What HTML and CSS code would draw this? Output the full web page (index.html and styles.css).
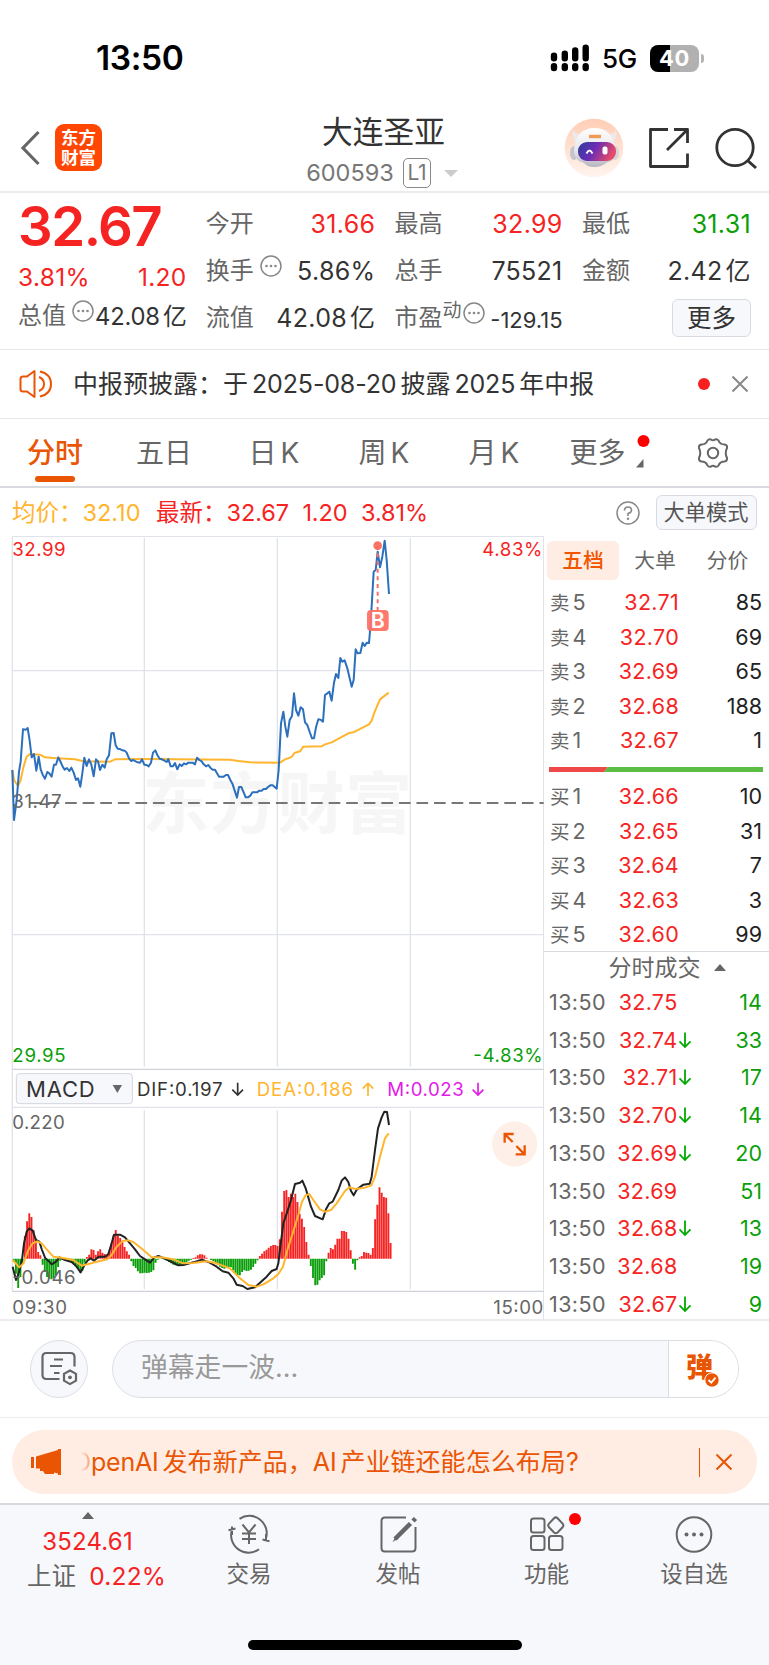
FILE: index.html
```
<!DOCTYPE html>
<html lang="zh-CN">
<head>
<meta charset="utf-8">
<title>大连圣亚 600593</title>
<link rel="stylesheet" href="styles.css">
</head>
<body>
<div class="status">
  <span class="clock">13:50</span>
  <svg class="signal" width="40" height="28" viewBox="0 0 40 28">
    <g stroke="#000" stroke-width="6.4" stroke-linecap="round">
      <path d="M4 11.8v2.4M14.8 9.8v4.4M25.2 6.5v7.7M35.7 3.6v10.6M4 22.3v1.8M14.8 22.3v1.8M25.2 22.3v1.8M35.7 22.3v1.8"/>
    </g>
  </svg>
  <span class="net">5G</span>
  <span class="battery">40</span><i class="battery-tip"></i>
</div>

<header class="header">
  <div class="head-left">
    <svg width="22" height="38" viewBox="0 0 22 38"><path d="M19.500 3 4 19 19.500 35" fill="none" stroke="#666" stroke-width="3.200"/></svg>
    <div class="logo">东方<br>财富</div>
  </div>
  <div class="head-mid">
    <div class="name">大连圣亚</div>
    <div class="code"><span>600593</span><b>L1</b><i></i></div>
  </div>
  <div class="head-right">
    <svg class="robot" width="60" height="60" viewBox="0 0 60 60">
      <defs>
        <linearGradient id="halo" x1="0" y1="0" x2="0" y2="1"><stop offset="0" stop-color="#ffcdb5"/><stop offset="1" stop-color="#fff4ee"/></linearGradient>
        <linearGradient id="visor" x1="0" y1="0" x2="1" y2=".3"><stop offset="0" stop-color="#2a3e9c"/><stop offset=".5" stop-color="#6c2cb4"/><stop offset="1" stop-color="#e34a6c"/></linearGradient>
        <linearGradient id="shell" x1="0" y1="0" x2="0" y2="1"><stop offset="0" stop-color="#fff"/><stop offset=".6" stop-color="#e6e4e8"/><stop offset="1" stop-color="#b4b6c0"/></linearGradient>
      </defs>
      <circle cx="30" cy="30" r="29.300" fill="url(#halo)"/>
      <path d="M9 11q1 5 8 6l-5 8Q7 18 9 11ZM52 11q-1 5-8 6l5 8q5-7 3-14Z" fill="#eee9ea"/>
      <ellipse cx="10" cy="35" rx="4" ry="7" fill="#c4c4cc"/><ellipse cx="51" cy="35" rx="4" ry="7" fill="#d4d4da"/>
      <path d="M10 32Q12 10 30.500 10T51 32Q52 43 43 44.500Q37 49 30 49T20 45Q10 43 10 32Z" fill="url(#shell)"/>
      <path d="M25 18.500h12" stroke="#ef9b55" stroke-width="3.400"/>
      <rect x="14" y="24" width="38" height="19" rx="9" fill="url(#visor)"/>
      <path d="M22.500 35.500q3-6 6 0" fill="none" stroke="#fff" stroke-width="2"/>
      <rect x="38.500" y="28.500" width="5" height="8" rx="2" fill="#fff"/>
    </svg>
    <svg width="44" height="44" viewBox="0 0 44 44"><path d="M21 3.500H3.500v37h37V27.500M27 3.500h13.500V17M40 4 20 24" fill="none" stroke="#333" stroke-width="2.800" stroke-linejoin="round"/></svg>
    <svg width="44" height="44" viewBox="0 0 44 44"><circle cx="21" cy="21.500" r="18.200" fill="none" stroke="#333" stroke-width="2.800"/><path d="m33 34 9 8" stroke="#333" stroke-width="3"/></svg>
  </div>
</header>

<section class="quote">
  <div class="col lead">
    <div class="price">32.67</div>
    <div class="pair red change"><span>3.81%</span><span>1.20</span></div>
    <div class="pair cap"><label>总值</label><svg class="info" viewBox="0 0 22 22"><use href="#dots"/></svg><span>42.08<em>亿</em></span></div>
  </div>
  <div class="col">
    <div class="pair"><label>今开</label><span class="red">31.66</span></div>
    <div class="pair"><label>换手</label><svg class="info" viewBox="0 0 22 22"><use href="#dots"/></svg><span>5.86%</span></div>
    <div class="pair"><label>流值</label><span>42.08<em>亿</em></span></div>
  </div>
  <div class="col">
    <div class="pair"><label>最高</label><span class="red">32.99</span></div>
    <div class="pair"><label>总手</label><span>75521</span></div>
    <div class="pair pe"><label>市盈<sup>动</sup></label><svg class="info" viewBox="0 0 22 22"><g id="dots"><circle cx="11" cy="11" r="10" fill="none" stroke="#888" stroke-width="1.500"/><g fill="#888"><circle cx="6.500" cy="11" r="1.300"/><circle cx="11" cy="11" r="1.300"/><circle cx="15.500" cy="11" r="1.300"/></g></g></svg><span>-129.15</span></div>
  </div>
  <div class="col">
    <div class="pair"><label>最低</label><span class="green">31.31</span></div>
    <div class="pair"><label>金额</label><span>2.42<em>亿</em></span></div>
    <div class="pair end"><button class="more">更多</button></div>
  </div>
</section>

<section class="notice">
  <svg width="34" height="30" viewBox="0 0 34 30" fill="none" stroke="#ea5504" stroke-width="2" stroke-linejoin="round"><path d="M15.500 2v26L8 22.500H4Q1.500 22.500 1.500 20V10Q1.500 7.500 4 7.500H8ZM20 8q5 2 5 7t-5 7M21 2.500Q32 5 32 15T21 27.500"/></svg>
  <p>中报预披露：于<em>2025-08-20</em>披露<em>2025</em>年中报</p>
  <i class="dot"></i>
  <svg class="close" width="18" height="18" viewBox="0 0 18 18"><path d="m1.500 1.500 15 15m0-15-15 15" stroke="#888" stroke-width="2"/></svg>
</section>

<nav class="tabs">
  <span class="on">分时</span><span>五日</span><span>日<em>K</em></span><span>周<em>K</em></span><span>月<em>K</em></span>
  <span class="drop">更多<svg width="18" height="36" viewBox="0 0 18 36"><circle cx="10.500" cy="6" r="6" fill="#f00"/><path d="M10.500 24v8.500H3Z" fill="#666"/></svg></span>
  <svg class="gear" width="34" height="32" viewBox="0 0 34 32" fill="none" stroke="#666" stroke-width="2"><path d="M11.500 3.500Q13 1.500 15 2.500Q17 4 19 2.500Q21 1.500 22.500 3.500Q24 7.500 28.500 7.500Q31.500 8 31 11Q28.500 16 31 21Q31.500 24 28.500 24.500Q24 24.500 22.500 28.500Q21 30.500 19 29.500Q17 28 15 29.500Q13 30.500 11.500 28.500Q10 24.500 5.500 24.500Q2.500 24 3 21Q5.500 16 3 11Q2.500 8 5.500 7.500Q10 7.500 11.500 3.500Z"/><circle cx="17" cy="16" r="5.200"/></svg>
</nav>

<section class="summary">
  <span class="avg">均价：<b>32.10</b></span>
  <span class="last">最新：<b>32.67</b><b>1.20</b><b>3.81%</b></span>
  <svg class="help" width="26" height="26" viewBox="0 0 26 26"><circle cx="13" cy="13" r="11" fill="none" stroke="#888" stroke-width="1.500"/><path d="M9.500 10.500Q9.500 7 13 7t3.500 3.200Q16.500 12.500 13 13.500v2.500" fill="none" stroke="#888" stroke-width="1.600"/><circle cx="13" cy="18.700" r="1.200" fill="#888"/></svg>
  <button>大单模式</button>
</section>

<main class="main">
  <svg class="chart" width="544" height="784" viewBox="0 0 1632 2352">
    <text class="mark" x="427" y="875" textLength="810">东方财富</text>
    <g class="grid">
      <path d="M37 1H1632M37 1V2266M1631 1V2352M433 6V1592M832 6V1592M1231 6V1592M37 404H1631M37 1196H1631M433 1723V2260M832 1723V2260M1231 1723V2260M37 1714H1631"/>
      <path class="strong" d="M37 1600H1631M37 2266H1631"/>
    </g>
    <path class="mid" d="M90 801H1631"/>
    <g transform="translate(0 -18)">
      <polyline class="amber" points="37,720 42,750 54,768 62,750 70,712 80,680 90,672 120,674 135,682 160,684 225,688 250,694 330,695 345,688 440,687 690,689 715,693 750,697 840,698 855,688 875,681 883,669 900,664 910,650 965,649 975,643 995,637 1045,610 1060,607 1107,583 1115,572 1123,548 1140,508 1166,488"/>
      <polyline class="blue" points="37,720 42,870 50,810 57,725 62,695 69,598 78,599 83,594 89,632 95,682 102,672 109,722 116,680 122,718 128,734 135,746 142,726 148,730 155,740 162,704 168,704 175,682 182,696 188,710 194,719 201,714 208,723 214,713 221,728 228,750 234,745 241,770 247,730 253,683 260,708 267,688 274,704 281,739 288,688 294,694 300,720 307,704 314,713 320,688 327,676 334,610 341,609 347,646 353,656 360,657 367,661 374,662 380,668 387,685 393,693 400,690 407,694 413,697 420,698 426,688 433,704 440,705 446,709 453,698 459,668 466,661 472,675 479,686 486,688 493,692 500,696 505,687 512,709 519,709 525,699 532,718 539,703 545,708 552,700 558,703 565,698 578,698 585,703 591,683 598,690 605,694 611,703 618,709 625,705 631,713 638,719 645,719 651,730 657,740 671,740 678,735 684,735 691,750 698,763 704,782 711,803 717,771 724,771 731,787 737,802 744,802 751,797 757,787 771,787 778,782 785,782 791,777 798,777 804,771 811,766 818,766 824,771 830,776 836,720 843,580 850,545 856,590 862,620 869,570 876,558 882,490 888,540 895,557 902,532 909,538 915,577 922,585 929,606 936,625 942,625 948,592 955,568 962,569 969,575 975,495 982,490 988,485 995,512 1002,458 1008,432 1015,444 1021,384 1027,395 1034,391 1042,415 1049,445 1055,470 1061,450 1067,358 1073,370 1081,369 1088,338 1094,348 1100,338 1107,339 1112,280 1121,125 1127,120 1133,65 1140,112 1147,80 1154,32 1160,90 1167,192"/>
      <path d="M1133 47V240" stroke="#fe6f63" stroke-width="6" stroke-dasharray="12 11"/>
      <circle cx="1133" cy="47" r="13" fill="#f96658" fill-opacity=".9"/>
      <rect x="1101" y="240" width="65" height="63" rx="12" fill="#ff6f62" fill-opacity=".93"/>
      <text x="1133.500" y="295" class="buy">B</text>
    </g>
    <text class="t red" x="37" y="59" textLength="160">32.99</text>
    <text class="t red" x="1447" y="59" textLength="180">4.83%</text>
    <text class="t gray" x="37" y="817" textLength="148">31.47</text>
    <text class="t green" x="37" y="1577" textLength="160">29.95</text>
    <text class="t green" x="1420" y="1577" textLength="208">-4.83%</text>

    <rect x="49" y="1613" width="348" height="90" rx="9" fill="#f7f8fb" stroke="#d4d6dd" stroke-width="3"/>
    <text x="78" y="1683" class="sel" textLength="206">MACD</text>
    <path d="M338 1647h28l-14 24Z" fill="#666"/>
    <text class="t black" x="411" y="1679" textLength="257">DIF:0.197</text>
    <text class="t amb" x="770" y="1679" textLength="289">DEA:0.186</text>
    <text class="t pink" x="1162" y="1679" textLength="229">M:0.023</text>
    <g fill="none" stroke-width="5">
      <path stroke="#333" d="M713 1640v37m-16-16 16 16 16-16"/>
      <path stroke="#ffb52e" d="M1104 1680v-38m-16 16 16-16 16 16"/>
      <path stroke="#e21be8" d="M1434 1640v37m-16-16 16 16 16-16"/>
    </g>
    <g transform="translate(0 1572)">
      <path id="up" class="up"/>
      <path id="down" class="down"/>
      <polyline class="dif" points="38,620 48,660 56,640 66,600 72,550 80,515 88,505 98,512 108,540 118,545 126,570 136,595 148,605 155,613 168,605 178,592 195,600 215,606 228,618 242,637 252,618 262,602 272,595 282,602 296,590 315,590 325,582 332,560 342,524 360,524 375,532 390,550 405,568 420,588 435,598 450,608 463,592 475,588 495,596 515,606 535,616 550,615 580,607 605,599 625,606 650,620 668,634 685,638 700,655 710,674 728,678 742,687 765,682 780,668 800,650 815,633 830,627 835,610 841,560 850,490 861,458 873,420 885,372 900,368 907,362 917,385 933,440 945,468 968,478 978,448 988,430 998,425 1015,390 1025,362 1035,352 1045,366 1053,393 1061,406 1071,388 1090,374 1109,371 1115,350 1125,270 1134,205 1145,172 1153,155 1161,156 1167,195"/>
      <polyline class="amber" points="38,600 58,622 70,610 85,570 98,550 112,544 125,550 140,568 160,590 185,593 220,600 245,617 265,612 290,605 322,598 335,585 350,560 368,543 385,541 400,546 430,570 455,592 485,592 520,598 550,610 580,609 620,604 650,610 690,625 720,655 745,675 770,680 790,673 820,655 835,642 849,620 862,570 878,520 895,465 906,425 917,406 928,402 940,420 960,448 975,455 993,450 1010,430 1035,393 1048,382 1065,387 1095,383 1114,376 1125,350 1140,290 1155,235 1166,220"/>
    </g>
    <text class="t gray" x="37" y="1779" textLength="157">0.220</text>
    <text class="t gray" x="37" y="2243" textLength="190">-0.046</text>
    <text class="t gray" x="37" y="2334" textLength="164">09:30</text>
    <text class="t gray" x="1480" y="2334" textLength="150">15:00</text>
    <circle cx="1544" cy="1824" r="68" fill="#fef0e9"/>
    <path d="m1538 1818-24-24m0 26v-26h27M1549 1830l25 25m0-27v27h-27" fill="none" stroke="#ea5504" stroke-width="7"/>
  </svg>

  <aside class="book">
    <div class="book-tabs"><span class="on">五档</span><span>大单</span><span>分价</span></div>
    <ul class="levels">
      <li><span>卖<em>5</em></span><b>32.71</b><i>85</i></li>
      <li><span>卖<em>4</em></span><b>32.70</b><i>69</i></li>
      <li><span>卖<em>3</em></span><b>32.69</b><i>65</i></li>
      <li><span>卖<em>2</em></span><b>32.68</b><i>188</i></li>
      <li><span>卖<em>1</em></span><b>32.67</b><i>1</i></li>
    </ul>
    <svg class="ratio" width="214" height="5" viewBox="0 0 214 5"><path d="M0 0h59l-4 5H0Z" fill="#ef4848"/><path d="M59 0h155v5H55Z" fill="#5bbd43"/></svg>
    <ul class="levels">
      <li><span>买<em>1</em></span><b>32.66</b><i>10</i></li>
      <li><span>买<em>2</em></span><b>32.65</b><i>31</i></li>
      <li><span>买<em>3</em></span><b>32.64</b><i>7</i></li>
      <li><span>买<em>4</em></span><b>32.63</b><i>3</i></li>
      <li><span>买<em>5</em></span><b>32.60</b><i>99</i></li>
    </ul>
    <div class="deal-title">分时成交<i></i></div>
    <ul class="deals">
      <li><span>13:50</span><b>32.75</b><u></u><i>14</i></li>
      <li><span>13:50</span><b>32.74</b><svg viewBox="0 0 14 18"><path id="fall" d="M7 1.500v14.500M1.500 10.300 7 16l5.500-5.700" fill="none" stroke="#0a0" stroke-width="1.800"/></svg><i>33</i></li>
      <li><span>13:50</span><b>32.71</b><svg viewBox="0 0 14 18"><use href="#fall"/></svg><i>17</i></li>
      <li><span>13:50</span><b>32.70</b><svg viewBox="0 0 14 18"><use href="#fall"/></svg><i>14</i></li>
      <li><span>13:50</span><b>32.69</b><svg viewBox="0 0 14 18"><use href="#fall"/></svg><i>20</i></li>
      <li><span>13:50</span><b>32.69</b><u></u><i>51</i></li>
      <li><span>13:50</span><b>32.68</b><svg viewBox="0 0 14 18"><use href="#fall"/></svg><i>13</i></li>
      <li><span>13:50</span><b>32.68</b><u></u><i>19</i></li>
      <li><span>13:50</span><b>32.67</b><svg viewBox="0 0 14 18"><use href="#fall"/></svg><i>9</i></li>
    </ul>
  </aside>
</main>

<section class="barrage">
  <div class="round">
    <svg width="38" height="36" viewBox="0 0 38 36" fill="none" stroke="#666" stroke-width="2.200"><path d="M19.500 28H6.500Q2.500 28 2.500 24V6Q2.500 2 6.500 2H30.500Q34.500 2 34.500 6V15.500M14 8.500H23M10 15H22M14 22h5.500"/><path d="m30 19.500 6 3.400v6.800l-6 3.400-6-3.400v-6.800Z"/><circle cx="30" cy="26.300" r="1.300" fill="#666" stroke-width="1.200"/></svg>
  </div>
  <div class="field">
    <span>弹幕走一波...</span>
    <div class="send">弹<svg width="16" height="16" viewBox="0 0 16 16"><circle cx="8" cy="8" r="7.200" fill="#ea5504" stroke="#fff" stroke-width="1"/><path d="m4.500 8 2.800 2.700 4.200-5" fill="none" stroke="#fff" stroke-width="1.800"/></svg></div>
  </div>
</section>

<section class="promo">
  <div class="pill">
    <svg width="30" height="28" viewBox="0 0 30 28"><path d="M0 9h3v11H0ZM5 8.500 27 2V1h3v26h-3v-1.500l-4-1V26H14l-2-3H9v-2.500H5Z" fill="#ea5504"/></svg>
    <p><s>O</s>penAI<em>发布新产品，</em>AI<em>产业链还能怎么布局</em>?</p>
    <i></i>
    <svg width="18" height="18" viewBox="0 0 18 18"><path d="m1.500 1.500 15 15m0-15-15 15" stroke="#ea5504" stroke-width="2"/></svg>
  </div>
</section>

<footer class="dock">
  <div class="index">
    <i></i>
    <b>3524.61</b>
    <p>上证<b>0.22%</b></p>
  </div>
  <div class="item"><svg width="44" height="40" viewBox="0 0 44 40" fill="none" stroke="#666" stroke-width="2"><path d="M12.500 4.800A17.500 17.500 0 0 1 38.800 25M35.500 25.500l7 1.800M39 20v7M32 35.200A17.500 17.500 0 0 1 5.200 15M8.500 14.500l-7 1.800M5 21v-8.500M15.500 10.500l6.500 8 6.500-8M22 18.500V30M15 19.500h14M15 25h14"/></svg>交易</div>
  <div class="item"><svg width="40" height="40" viewBox="0 0 40 40" fill="none" stroke="#666" stroke-width="2"><path d="M28 3.500H7Q3.500 3.500 3.500 7v27Q3.500 37.500 7 37.500H34Q37.500 37.500 37.500 34V13"/><path d="M37.500 4.500l-2.500 2.500M32.500 9.500 17 25" stroke-width="4.500"/><path d="m18 22-3.500 6 6-3.500Z" fill="#666" stroke="none"/></svg>发帖</div>
  <div class="item"><svg width="40" height="40" viewBox="0 0 40 40" fill="none" stroke="#666" stroke-width="2"><rect x="4" y="4.500" width="13.500" height="14" rx="2.500"/><rect x="4" y="22" width="13.500" height="14" rx="2.500"/><rect x="22" y="22" width="13.500" height="14" rx="2.500"/><path d="M27 4.200Q28.800 2.500 30.600 4.200L35.800 9.800Q37 11.500 35.800 13L30.600 18.500Q28.800 20 27 18.500L21.800 13Q20.600 11.500 21.800 9.800Z"/></svg><i class="dot"></i>功能</div>
  <div class="item"><svg width="40" height="40" viewBox="0 0 40 40"><circle cx="20" cy="20.500" r="17.300" fill="none" stroke="#666" stroke-width="2"/><g fill="#666"><circle cx="12.500" cy="20.500" r="2"/><circle cx="20" cy="20.500" r="2"/><circle cx="27.500" cy="20.500" r="2"/></g></svg>设自选</div>
</footer>
<div class="home"><i></i></div>
<script src="macd.js"></script>
</body>
</html>
```
FILE: macd.js
```
// Histogram heights, one value per trading minute since 09:30.
const bars = [-10,-45,-88,-55,-15,68,112,136,125,85,60,20,10,-18,-40,-55,-60,-62,-58,-50,-25,-6,0,-3,-5,-8,-10,-15,-20,-28,
  -42,-36,-12,5,12,28,26,12,22,28,18,14,10,20,45,70,86,70,62,50,35,22,12,-8,-22,-28,-38,-44,-44,-42,
  -43,-42,-40,-35,-12,-3,-1,0,-3,-6,-10,-14,-18,-20,-21,-20,-18,-15,-10,-6,-3,2,4,10,13,13,10,3,0,-4,
  -8,-12,-18,-24,-28,-30,-28,-26,-26,-35,-45,-50,-50,-40,-35,-37,-36,-33,-25,-15,-5,8,15,22,27,33,38,41,41,38,
  58,141,203,206,185,195,185,195,170,135,120,95,50,12,-22,-58,-80,-78,-65,-58,-50,-8,18,32,28,42,60,60,83,83,
  80,60,25,-15,-33,-5,4,8,20,18,17,12,32,118,162,214,198,185,183,136,47];
const zero = 596;
const pathFor = (test) => bars
  .map((v, i) => (test(v) ? `M${(41.3 + i * 6.65).toFixed(1)} ${zero}V${zero - v}` : ''))
  .join('');
document.getElementById('up').setAttribute('d', pathFor((v) => v > 0));
document.getElementById('down').setAttribute('d', pathFor((v) => v < 0));
```
FILE: styles.css
```
* { box-sizing: border-box; margin: 0; padding: 0; }
body { width: 769px; background: #fff; color: #333; font-family: Inter, "Noto Sans CJK SC", sans-serif; font-size: 24px; line-height: 34px; }
i, em { font-style: normal; }
b { font-weight: 400; }
ul { list-style: none; }
svg { display: block; flex: none; }
button { font: inherit; color: inherit; background: #f7f8fb; border: 1.5px solid #d9dbe2; border-radius: 6px; white-space: nowrap; }
.red { color: #f62323; fill: #f62323; }
.green { color: #0a9f0a; fill: #0a9f0a; }
.dot { width: 12px; height: 12px; border-radius: 50%; background: #f62020; }

.status { height: 112px; padding: 4px 65px 0 96px; display: flex; align-items: center; color: #000; }
.clock { font-size: 33.5px; font-weight: 600; letter-spacing: -.4px; margin-right: auto; }
.signal { margin-right: 12px; }
.net { font-size: 26px; font-weight: 500; letter-spacing: -.3px; margin-right: 13px; padding-top: 1px; }
.battery { width: 49px; height: 27px; border-radius: 8px; background: linear-gradient(90deg, #000 41%, #b1b1b1 41%); color: #fff; font-size: 22px; font-weight: 700; line-height: 27px; letter-spacing: .6px; text-align: center; }
.battery-tip { width: 3px; height: 9px; margin-left: 2px; border-radius: 0 3px 3px 0; background: #b5b5b5; }

.header { height: 81px; border-bottom: 2px solid #ececee; display: grid; grid-template-columns: 250px 1fr 252px; }
.head-left { display: flex; align-items: center; padding: 0 0 8px 19px; gap: 14px; }
.logo { width: 47px; height: 47px; border-radius: 9px; background: #ff4603; color: #fff; font-size: 17.5px; font-weight: 700; line-height: 19.5px; padding-top: 4px; text-align: center; }
.head-mid { text-align: center; }
.name { font-size: 30.7px; line-height: 39px; }
.code { display: flex; align-items: center; justify-content: center; color: #777; font-size: 23.5px; line-height: 30px; margin: 7px 3px 0 0; }
.code b { border: 1.5px solid #888; border-radius: 5px; width: 28px; line-height: 28px; font-size: 21px; letter-spacing: -.5px; margin: 0 13px 0 9px; }
.code i { border: 7px solid transparent; border-top-color: #ccc; border-bottom: 0; }
.head-right { display: flex; align-items: center; justify-content: flex-end; padding: 0 11px 8px 0; gap: 23px; }

.quote { height: 157px; border-bottom: 1.5px solid #e6e6e8; padding: 6px 0 0 19px; display: grid; grid-template-columns: 167.5px 169.5px 168px 169px; column-gap: 19.3px; }
.col { display: grid; grid-template-rows: 47px 47px 47px; padding-top: 1px; }
.lead { grid-template-rows: 60px 33px 47px; padding-top: 0; }
.quote .pair { display: flex; align-items: center; justify-content: space-between; white-space: nowrap; font-size: 25px; letter-spacing: .3px; }
.quote label { color: #666; font-size: 24px; letter-spacing: 0; }
.quote em { margin-left: 3px; }
.price { font-size: 54.5px; line-height: 54px; font-weight: 600; color: #f62323; letter-spacing: -1.5px; margin-left: -1px; }
.quote .change { font-size: 24.5px; letter-spacing: .3px; padding-top: 3px; margin-left: -1px; }
.info { width: 22px; height: 22px; margin: 0 auto 10px 6px; }
.quote .cap { font-size: 23.8px; letter-spacing: -.2px; padding-top: 1px; margin-left: -1px; }
.cap span { padding-top: 2px; }
.quote .pe { font-size: 22px; letter-spacing: 0; }
.pe .info { margin-left: 1px; }
.pe sup { font-size: 19px; line-height: 10px; vertical-align: 9px; }
.pe span { padding-top: 4px; }
.quote .end { justify-content: flex-end; }
.more { width: 79px; height: 38px; font-size: 24.5px; line-height: 34px; letter-spacing: 0; }

.notice { height: 69px; border-bottom: 1.5px solid #e6e6e8; padding: 0 20px 0 19px; display: flex; align-items: center; font-size: 25px; }
.notice p { margin: 0 auto 0 20px; white-space: nowrap; }
.notice em { margin: 0 4px; letter-spacing: -.15px; }
.close { margin-left: 21px; }

.tabs { height: 69px; border-bottom: 2px solid #d9dae0; display: grid; grid-template-columns: 110px 108px 112px 108px 112px 108px 109px; justify-items: center; color: #666; font-size: 28px; line-height: 68px; }
.tabs .on { color: #ea5504; font-weight: 500; height: 64px; display: flex; flex-direction: column; align-items: center; }
.tabs .on::after { content: ""; width: 40px; height: 6px; margin-top: -11px; border-radius: 3px; background: #ea5504; }
.tabs em { margin-left: 4px; }
.drop { display: flex; align-items: center; padding-left: 12px; }
.drop svg { margin-left: 7px; }
.gear { margin: 18px 0 0 1px; }

.summary { height: 48px; padding: 1px 12.5px 0 12px; display: flex; align-items: center; font-size: 23.5px; white-space: nowrap; }
.avg { color: #ffb52e; width: 144px; }
.last { color: #f62323; margin-right: auto; }
.last b { margin-right: 13.5px; letter-spacing: -.1px; }
.help { margin-right: 15px; }
.summary button { width: 101px; height: 35px; color: #555; font-size: 21.2px; line-height: 31px; }

.main { display: grid; grid-template-columns: 544px 225px; height: 785px; border-bottom: 2px solid #ececee; }
.grid path { fill: none; stroke: #e1e3eb; stroke-width: 4; }
.grid .strong { stroke: #d0d2da; }
.mid { stroke: #777; stroke-width: 6; stroke-dasharray: 35 17.700; }
.mark { font-size: 202px; font-weight: 700; fill: #f6f6f6; }
.blue, .amber, .dif { fill: none; stroke-width: 6; stroke-linejoin: round; stroke: #2c70bd; }
.amber { stroke: #ffb52e; }
.dif { stroke: #222; }
.up { stroke: #f62323; stroke-width: 5.600; }
.down { stroke: #0a9f0a; stroke-width: 5.600; }
.t { font-size: 56px; }
.gray { fill: #666; }
.black { fill: #333; }
.amb { fill: #ffb52e; }
.pink { fill: #e21be8; }
.sel { font-size: 66px; fill: #333; }
.buy { font-size: 64px; font-weight: 600; fill: #fff; text-anchor: middle; }

.book { padding-top: 5px; color: #666; }
.book-tabs { display: grid; grid-template-columns: 72px 72px 73px; margin-left: 3px; text-align: center; font-size: 20.800px; line-height: 39px; height: 44px; }
.book-tabs .on { height: 39px; color: #f25500; font-weight: 500; background: #ffece3; border-radius: 6px; }
.levels { padding: 0 7px 0 6px; }
.levels li { display: grid; grid-template-columns: 60px 69px 1fr; height: 34.600px; line-height: 34.600px; font-size: 21.500px; }
.levels span { font-size: 19.500px; }
.levels em { font-size: 21.500px; margin-left: 3px; }
.levels b, .deals b { color: #f62323; text-align: right; letter-spacing: .3px; }
.levels i { color: #222; text-align: right; }
.ratio { margin: 9px 0 7px 4.500px; }
.deal-title { border-top: 1.500px solid #d9dae0; height: 32px; display: flex; align-items: center; justify-content: center; font-size: 23px; padding: 1px 0 0 21px; margin-top: -1px; }
.deal-title i { border: 6px solid transparent; border-bottom: 7px solid #666; border-top: 0; margin-left: 13px; }
.deals { padding: 0 7px 0 5px; }
.deals li { display: grid; grid-template-columns: 62px 66.500px 16px 1fr; align-items: center; height: 37.750px; font-size: 21.500px; }
.deals span { letter-spacing: .4px; }
.deals svg { width: 14px; height: 18px; margin-left: 0; }
.deals i { color: #0a9f0a; text-align: right; }

.barrage { height: 97px; border-bottom: 1.500px solid #ececee; padding: 19px 30px 0 30px; display: flex; gap: 24px; }
.round { width: 58px; height: 58px; border-radius: 50%; border: 1.500px solid #dcdee4; background: #f7f8fb; display: flex; align-items: center; justify-content: center; }
.field { flex: 1; height: 58px; border-radius: 29px; border: 1.500px solid #dcdee4; background: #f7f8fb; display: flex; justify-content: space-between; overflow: hidden; color: #999; font-size: 26.800px; line-height: 53px; padding-left: 28px; }
.send { width: 70px; border-left: 1.500px solid #dcdee4; background: #fff; color: #ea5504; font-weight: 900; font-size: 27px; line-height: 53px; display: flex; padding-left: 17px; }
.send svg { margin: 31px 0 0 -9px; }

.promo { height: 85px; padding: 12px 12.500px 0 12px; }
.pill { height: 64px; border-radius: 32px; background: #ffede4; color: #ea5504; display: flex; align-items: center; padding: 0 23.500px 0 19px; font-size: 25px; }
.pill p { flex: 1; margin-left: 11px; white-space: nowrap; letter-spacing: -.2px; }
.pill s { text-decoration: none; color: transparent; background: linear-gradient(90deg, transparent 45%, #ea5504 150%); background-clip: text; -webkit-background-clip: text; }
.pill em { margin: 0 0 0 4px; letter-spacing: .05px; }
.pill i { width: 1.500px; height: 29px; background: #ea5504; margin-right: 15px; }

.dock { height: 112px; border-top: 2px solid #d7d9df; background: #f7f8fb; display: grid; grid-template-columns: 175px 148px 150px 147px 148px; color: #666; }
.index { display: flex; flex-direction: column; align-items: center; line-height: 34px; letter-spacing: .2px; }
.index > i { border: 6.500px solid transparent; border-bottom: 7px solid #666; border-top: 0; margin: 7px 0 6px; }
.index b { color: #f62323; }
.index p { margin-left: 18px; font-size: 24.500px; }
.index p b { margin-left: 13px; }
.item { font-size: 22.500px; text-align: center; display: grid; grid-template-rows: 43px 34px; align-content: start; justify-items: center; padding-top: 9px; }
.item svg, .item .dot { grid-area: 1 / 1; }
.item .dot { margin: -1px 0 0 57px; background: #f00; }
.home { height: 51px; background: #f7f8fb; display: flex; justify-content: center; padding-top: 24.500px; }
.home i { width: 274px; height: 10px; border-radius: 5px; background: #000; }
```
